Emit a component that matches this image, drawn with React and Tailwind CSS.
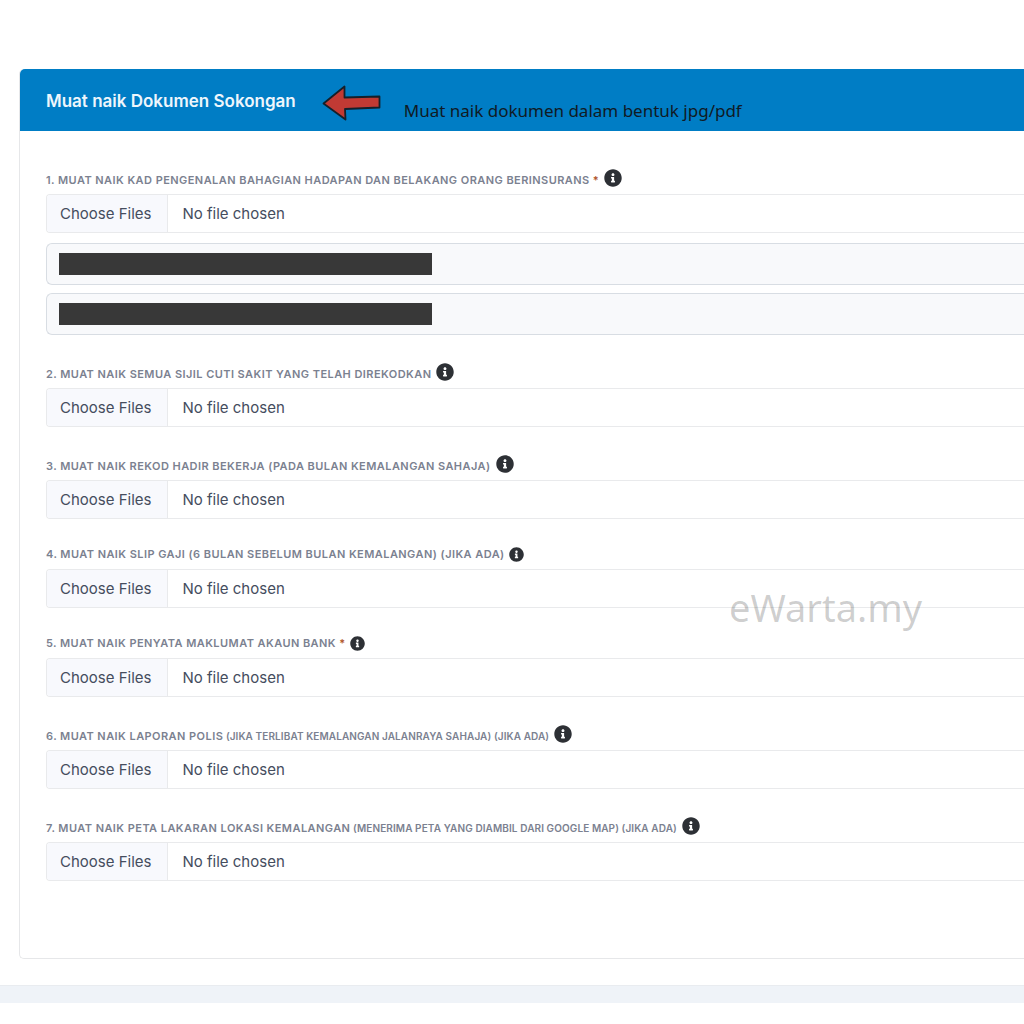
import { FaInfoCircle } from "react-icons/fa";
import clsx from "clsx";

const documents = [
  {
    id: "kad-pengenalan",
    label: "1. Muat naik kad pengenalan bahagian hadapan dan belakang orang berinsurans",
    required: true,
    uploaded: 2,
  },
  { id: "sijil-cuti", label: "2. Muat naik semua sijil cuti sakit yang telah direkodkan" },
  { id: "rekod-hadir", label: "3. Muat naik rekod hadir bekerja (pada bulan kemalangan sahaja)" },
  {
    id: "slip-gaji",
    label: "4. Muat naik slip gaji (6 bulan sebelum bulan kemalangan) (jika ada)",
    compact: true,
  },
  { id: "akaun-bank", label: "5. Muat naik penyata maklumat akaun bank", required: true, compact: true },
  {
    id: "laporan-polis",
    label: "6. Muat naik laporan polis",
    note: "(jika terlibat kemalangan jalanraya sahaja) (jika ada)",
  },
  {
    id: "peta-lakaran",
    label: "7. Muat naik peta lakaran lokasi kemalangan",
    note: "(menerima peta yang diambil dari google map) (jika ada)",
  },
];

const ArrowLeft = () => (
  <svg viewBox="0 0 60 36" className="h-9 w-[60px] shrink-0" aria-hidden="true">
    <path
      d="M1.5 18.5 22.5 1.5 22.5 12.5 57.5 11.5 57.5 22.5 23 24 23.5 34.5Z"
      fill="#c13a34"
      stroke="#14202b"
      strokeWidth="1.8"
      strokeLinejoin="round"
    />
  </svg>
);

// Fail yang sudah dimuat naik, nama fail disembunyikan
const UploadedFile = () => (
  <li className="flex h-[42px] items-center rounded-l-md border border-r-0 border-[#d8dde3] bg-[#f8f9fb] pl-3">
    <div className="h-[22px] w-[373px] bg-[#383838]"></div>
  </li>
);

const UploadField = ({ item }) => {
  return (
    <div>
      <div
        className={clsx(
          "flex",
          item.compact ? "mb-1.5 h-4 items-start gap-1" : "mb-[7px] h-[18px] items-end gap-[5px]"
        )}
      >
        <label
          htmlFor={item.id}
          className="whitespace-nowrap text-[11px] leading-[14px] font-semibold tracking-[0.04em] text-[#7b8190] uppercase"
        >
          {item.label}
          {item.note && <span className="text-[10px] tracking-[0.01em]"> {item.note}</span>}
          {item.required && <span className="text-[#b0562c]"> *</span>}
        </label>
        <button type="button" aria-label="Maklumat" className="shrink-0 text-[#2d3035]">
          <FaInfoCircle className={item.compact ? "size-[15px]" : "size-[18px]"} />
        </button>
      </div>
      <input
        id={item.id}
        type="file"
        multiple
        className="block h-[39px] w-full rounded-l-[4px] border border-r-0 border-[#e9eaec] bg-white text-[15px] leading-[37px] text-[#454d5e] file:mr-[14px] file:h-[37px] file:border-r file:border-[#e9eaec] file:bg-[#f8f9fd] file:pr-4 file:pl-[13px] file:text-[#454d5e]"
      />
      {item.uploaded && (
        <ul className="mt-2.5 flex flex-col gap-2">
          {Array.from({ length: item.uploaded }, (_, i) => (
            <UploadedFile key={i} />
          ))}
        </ul>
      )}
    </div>
  );
};

const App = () => {
  return (
    <div className="min-h-screen overflow-x-hidden bg-white pt-[69px] font-['Inter',sans-serif]">
      <main className="relative ml-[19px] rounded-l-[5px] border-b border-l border-[#e6e7e9] pb-[77px]">
        <header className="flex h-[62px] rounded-tl-[5px] bg-[#007dc5] pl-[26px]">
          <h1 className="mt-[18px] text-[17px] leading-7 font-semibold whitespace-nowrap text-[#eef6fc]">
            Muat naik Dokumen Sokongan
          </h1>
          <div className="mt-4 ml-[26px]">
            <ArrowLeft />
          </div>
          <p className="mt-[30px] ml-[22px] font-['Noto_Sans',sans-serif] text-[17px] leading-6 whitespace-nowrap text-[#101a24]">
            Muat naik dokumen dalam bentuk jpg/pdf
          </p>
        </header>
        <form className="mt-[38px] flex flex-col gap-7 pl-[26px]">
          {documents.map((item) => (
            <UploadField key={item.id} item={item} />
          ))}
        </form>
        <div className="pointer-events-none absolute top-[514px] left-[709px] font-['Noto_Sans',sans-serif] text-[38px] leading-[48px] text-black/20">
          eWarta.my
        </div>
      </main>
      <footer className="mt-[26px] h-[18px] border-t border-[#e9ecf0] bg-[#eff3f8]"></footer>
    </div>
  );
};

export default App;
